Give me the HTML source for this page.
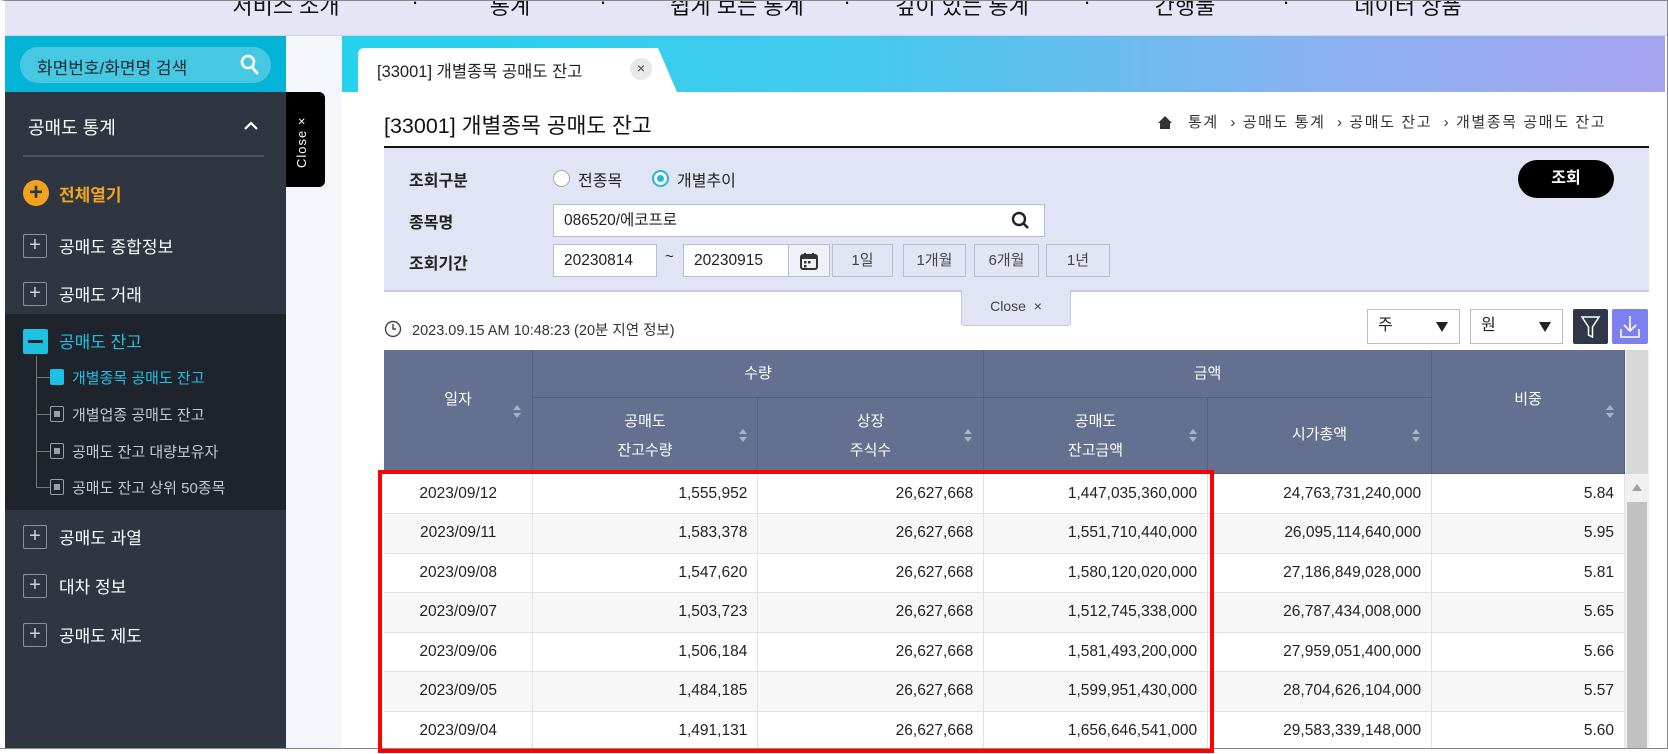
<!DOCTYPE html>
<html><head><meta charset="utf-8"><style>
*{box-sizing:border-box;margin:0;padding:0}
body{width:1668px;height:754px;overflow:hidden;background:#fff;font-family:"Liberation Sans","Noto Sans CJK KR",sans-serif;position:relative;color:#222}
.a{position:absolute}
.nav{left:0;top:0;width:1668px;height:36px;background:#e4e6f6;border-bottom:1px solid #d0d3e6}
.nav span{position:absolute;top:-11px;font-size:22px;color:#111;transform:translateX(-50%);white-space:nowrap}
.side{left:5px;top:36px;width:281px;height:712px;background:#2f3541}
.srch{left:5px;top:36px;width:281px;height:56px;background:#03b4d6}
.pill{left:20px;top:47px;width:251px;height:36px;border-radius:18px;background:#47c8e2;font-size:17px;color:#1a2a33;padding:7px 0 0 17px}
.st{color:#fff;font-size:17px;white-space:nowrap}
.box{width:24px;height:24px;border:1px solid #8a909c;border-radius:2px;color:#cfd3da;font-size:20px;line-height:20px;text-align:center}
.sub{font-size:15px;color:#c5c9d0;white-space:nowrap}
.ic{width:14px;height:16px;border:1px solid #9aa0aa;border-radius:2px}
.ic:after{content:"";position:absolute;left:3px;top:4px;width:6px;height:6px;background:#9aa0aa}
.grad{left:342px;top:36px;width:1323px;height:56px;background:linear-gradient(90deg,#25d2ec 0%,#45c8ee 40%,#8bb1f0 75%,#a7a5ef 100%)}
.th{background:#647090;color:#fff;font-size:15px;text-align:center;border-right:1px solid #56607e;border-bottom:1px solid #56607e}
.sort{position:absolute;width:8px;height:14px}
.sort:before{content:"";position:absolute;left:0;top:0;border-left:4px solid transparent;border-right:4px solid transparent;border-bottom:5px solid #a9b2c8}
.sort:after{content:"";position:absolute;left:0;top:8px;border-left:4px solid transparent;border-right:4px solid transparent;border-top:5px solid #a9b2c8}
table{border-collapse:collapse;position:absolute;left:384px;top:474px;width:1241px}
td{height:39.5px;font-size:15.5px;border-right:1px solid #e2e2e2;border-bottom:1px solid #e2e2e2;padding-right:10px;text-align:right;color:#222}
td:first-child{text-align:center;padding:0}
tr:nth-child(even) td{background:#f7f7f8}
.btn{height:33px;background:#e2e5f3;border:1px solid #b9bdd0;font-size:15px;color:#444;text-align:center;line-height:31px}
.inp{background:#fff;border:1px solid #b9bdd0;font-size:15.5px;padding-left:10px;line-height:31px;height:33px}
.lbl{font-size:16px;font-weight:bold;color:#222}
</style></head><body>
<div class="a nav">
<span style="left:286px">서비스 소개</span><span style="left:415px">·</span><span style="left:510px">통계</span><span style="left:603px">·</span><span style="left:737px">쉽게 보는 통계</span><span style="left:847px">·</span><span style="left:962px">깊이 있는 통계</span><span style="left:1087px">·</span><span style="left:1185px">간행물</span><span style="left:1286px">·</span><span style="left:1408px">데이터 상품</span>
</div>
<div class="a" style="left:0;top:0;width:1668px;height:754px;border:1px solid #888;border-left-width:5px;border-left-color:#fff;pointer-events:none"></div>
<div class="a side"></div>
<div class="a srch"></div>
<div class="a pill">화면번호/화면명 검색</div>
<svg class="a" style="left:240px;top:54px" width="20" height="22" viewBox="0 0 20 22"><circle cx="8" cy="8" r="6" fill="none" stroke="#fff" stroke-width="2.6"/><path d="M12 13l5 6" stroke="#fff" stroke-width="2.8" stroke-linecap="round"/></svg>
<div class="a st" style="left:28px;top:114px;font-size:18px">공매도 통계</div>
<svg class="a" style="left:243px;top:120px" width="16" height="12"><path d="M2 9l6-6 6 6" fill="none" stroke="#fff" stroke-width="2.2"/></svg>
<div class="a" style="left:23px;top:155px;width:241px;height:2px;background:#4b5261"></div>
<div class="a" style="left:23px;top:180px;width:26px;height:26px;border-radius:50%;background:#f0a21c;color:#2f3541;font-size:24px;line-height:25px;text-align:center;font-weight:bold">+</div>
<div class="a st" style="left:59px;top:181px;color:#f2a51e;font-size:17px;font-weight:bold">전체열기</div>
<div class="a box" style="left:23px;top:234px">+</div><div class="a st" style="left:59px;top:233px">공매도 종합정보</div>
<div class="a box" style="left:23px;top:282px">+</div><div class="a st" style="left:59px;top:281px">공매도 거래</div>
<div class="a" style="left:5px;top:314px;width:281px;height:196px;background:#1e232c"></div>
<div class="a" style="left:23px;top:329px;width:25px;height:25px;background:#1fc1e2;border-radius:2px"><div class="a" style="left:5px;top:11px;width:15px;height:3px;background:#1e232c"></div></div>
<div class="a st" style="left:59px;top:328px;color:#1fc1e2">공매도 잔고</div>
<div class="a" style="left:36px;top:356px;width:1px;height:132px;background:#777"></div>
<div class="a" style="left:36px;top:377px;width:14px;height:1px;background:#777"></div>
<div class="a" style="left:36px;top:414px;width:14px;height:1px;background:#777"></div>
<div class="a" style="left:36px;top:451px;width:14px;height:1px;background:#777"></div>
<div class="a" style="left:36px;top:487px;width:14px;height:1px;background:#777"></div>
<div class="a" style="left:50px;top:369px;width:14px;height:16px;background:#1fc1e2;border-radius:2px"></div>
<div class="a sub" style="left:72px;top:367px;color:#1fc1e2">개별종목 공매도 잔고</div>
<div class="a ic" style="left:50px;top:406px"></div><div class="a sub" style="left:72px;top:404px">개별업종 공매도 잔고</div>
<div class="a ic" style="left:50px;top:443px"></div><div class="a sub" style="left:72px;top:441px">공매도 잔고 대량보유자</div>
<div class="a ic" style="left:50px;top:479px"></div><div class="a sub" style="left:72px;top:477px">공매도 잔고 상위 50종목</div>
<div class="a box" style="left:23px;top:525px">+</div><div class="a st" style="left:59px;top:524px">공매도 과열</div>
<div class="a box" style="left:23px;top:574px">+</div><div class="a st" style="left:59px;top:573px">대차 정보</div>
<div class="a box" style="left:23px;top:623px">+</div><div class="a st" style="left:59px;top:622px">공매도 제도</div>
<div class="a" style="left:286px;top:36px;width:56px;height:712px;background:#f5f6fb"></div>
<div class="a" style="left:286px;top:92px;width:39px;height:95px;background:#000;border-radius:0 6px 6px 0"><div class="a" style="left:8px;top:76px;transform:rotate(-90deg);transform-origin:0 0;color:#fff;font-size:13px;white-space:nowrap;letter-spacing:1px">Close ×</div></div>
<div class="a grad"></div>
<div class="a" style="left:358px;top:48px;width:300px;height:44px;background:#fff;border-radius:6px 0 0 0"></div>
<svg class="a" style="left:655px;top:48px" width="22" height="44"><path d="M0 0h3l19 44H0z" fill="#fff"/></svg>
<div class="a" style="left:377px;top:58px;font-size:16.5px;color:#222;white-space:nowrap">[33001] 개별종목 공매도 잔고</div>
<div class="a" style="left:630px;top:58px;width:22px;height:22px;border-radius:50%;background:#e8e8e8;font-size:14px;text-align:center;line-height:21px;color:#444">×</div>
<div class="a" style="left:342px;top:92px;width:1323px;height:656px;background:#fff"></div>
<div class="a" style="left:384px;top:109px;font-size:21.5px;color:#111;white-space:nowrap">[33001] 개별종목 공매도 잔고</div>
<svg class="a" style="left:1157px;top:115px" width="16" height="15"><path d="M8 1L1 8h2v6h10V8h2z" fill="#333"/></svg>
<div class="a" style="left:1188px;top:111px;font-size:15px;color:#333;white-space:nowrap;letter-spacing:1.6px">통계 &nbsp;› 공매도 통계 &nbsp;› 공매도 잔고 &nbsp;› 개별종목 공매도 잔고</div>
<div class="a" style="left:384px;top:146px;width:1265px;height:146px;background:#e1e4f4;border-top:2px solid #111;border-bottom:2px solid #c5c9dc"></div>
<div class="a lbl" style="left:409px;top:167px">조회구분</div>
<div class="a lbl" style="left:409px;top:209px">종목명</div>
<div class="a lbl" style="left:409px;top:250px">조회기간</div>
<div class="a" style="left:553px;top:170px;width:17px;height:17px;border-radius:50%;border:1px solid #aaa;background:#fff"></div>
<div class="a" style="left:578px;top:167px;font-size:16px">전종목</div>
<div class="a" style="left:652px;top:170px;width:17px;height:17px;border-radius:50%;border:2px solid #1fb8dc;background:#fff"><div class="a" style="left:3px;top:3px;width:7px;height:7px;border-radius:50%;background:#1fb8dc"></div></div>
<div class="a" style="left:677px;top:167px;font-size:16px">개별추이</div>
<div class="a inp" style="left:553px;top:204px;width:492px">086520/에코프로</div>
<svg class="a" style="left:1011px;top:211px" width="20" height="20"><circle cx="8" cy="8" r="6" fill="none" stroke="#222" stroke-width="2.4"/><path d="M12 12l5 5" stroke="#222" stroke-width="2.6"/></svg>
<div class="a inp" style="left:553px;top:244px;width:104px">20230814</div>
<div class="a" style="left:665px;top:248px;font-size:15px">~</div>
<div class="a inp" style="left:683px;top:244px;width:106px">20230915</div>
<div class="a btn" style="left:788px;top:244px;width:42px;background:#f0f1f7"><svg width="20" height="20" style="margin-top:6px" viewBox="0 0 20 20"><rect x="2" y="4" width="16" height="14" rx="2" fill="none" stroke="#333" stroke-width="2"/><rect x="2" y="4" width="16" height="4" fill="#333"/><path d="M6 2v4M14 2v4" stroke="#333" stroke-width="2"/><rect x="5" y="10" width="2.5" height="2.5" fill="#333"/><rect x="9" y="10" width="2.5" height="2.5" fill="#333"/><rect x="5" y="14" width="2.5" height="2.5" fill="#333"/></svg></div>
<div class="a btn" style="left:832px;top:244px;width:61px">1일</div>
<div class="a btn" style="left:903px;top:244px;width:63px">1개월</div>
<div class="a btn" style="left:974px;top:244px;width:65px">6개월</div>
<div class="a btn" style="left:1046px;top:244px;width:64px">1년</div>
<div class="a" style="left:1518px;top:160px;width:96px;height:38px;border-radius:19px;background:#000;color:#fff;font-size:16px;font-weight:bold;text-align:center;line-height:37px">조회</div>
<div class="a" style="left:961px;top:290px;width:110px;height:36px;background:#e1e4f4;border:1px solid #c5c9dc;border-top:none;border-radius:0 0 3px 3px;font-size:14px;color:#444;text-align:center;line-height:32px">Close &nbsp;×</div>
<svg class="a" style="left:384px;top:320px" width="18" height="18"><circle cx="9" cy="9" r="7.5" fill="none" stroke="#444" stroke-width="1.4"/><path d="M9 4v5h3" fill="none" stroke="#444" stroke-width="1.4"/></svg>
<div class="a" style="left:412px;top:319px;font-size:14.5px;color:#333;white-space:nowrap">2023.09.15 AM 10:48:23 (20분 지연 정보)</div>
<div class="a inp" style="left:1367px;top:309px;width:93px;height:35px;font-size:16px">주</div>
<div class="a" style="left:1436px;top:322px;border-left:6px solid transparent;border-right:6px solid transparent;border-top:10px solid #222"></div>
<div class="a inp" style="left:1470px;top:309px;width:93px;height:35px;font-size:16px">원</div>
<div class="a" style="left:1539px;top:322px;border-left:6px solid transparent;border-right:6px solid transparent;border-top:10px solid #222"></div>
<div class="a" style="left:1573px;top:309px;width:35px;height:35px;background:#2f3646;border-radius:2px"><svg width="35" height="35"><path d="M9 8h17l-6.5 10v10l-4-2V18z" fill="none" stroke="#fff" stroke-width="1.5"/></svg></div>
<div class="a" style="left:1612px;top:309px;width:36px;height:35px;background:#7d80ef;border-radius:2px"><svg width="36" height="35"><path d="M18 7v15M12 16l6 6 6-6M9 20v8h18v-8" fill="none" stroke="#fff" stroke-width="1.6"/></svg></div>
<div class="a th" style="left:384px;top:350px;width:149px;height:124px;line-height:122px;padding-bottom:0"><span style="position:relative;top:-11px">일자</span></div><div class="a sort" style="left:513px;top:405px"></div>
<div class="a th" style="left:533px;top:350px;width:451px;height:48px;line-height:47px">수량</div>
<div class="a th" style="left:984px;top:350px;width:448px;height:48px;line-height:47px">금액</div>
<div class="a th" style="left:1432px;top:350px;width:193px;height:124px;line-height:122px"><span style="position:relative;top:-11px">비중</span></div><div class="a sort" style="left:1606px;top:405px"></div>
<div class="a th" style="left:533px;top:398px;width:225px;height:76px;padding-top:9px;line-height:29px">공매도<br>잔고수량</div><div class="a sort" style="left:739px;top:429px"></div>
<div class="a th" style="left:758px;top:398px;width:226px;height:76px;padding-top:9px;line-height:29px">상장<br>주식수</div><div class="a sort" style="left:964px;top:429px"></div>
<div class="a th" style="left:984px;top:398px;width:224px;height:76px;padding-top:9px;line-height:29px">공매도<br>잔고금액</div><div class="a sort" style="left:1189px;top:429px"></div>
<div class="a th" style="left:1208px;top:398px;width:224px;height:76px;line-height:74px">시가총액</div><div class="a sort" style="left:1412px;top:429px"></div>
<div class="a" style="left:1625px;top:350px;width:24px;height:398px;background:#f0f0f0"></div>
<div class="a" style="left:1626px;top:350px;width:22px;height:124px;background:#d8d8d8"></div>
<div class="a" style="left:1632px;top:484px;border-left:5px solid transparent;border-right:5px solid transparent;border-bottom:7px solid #a0a0a0"></div>
<div class="a" style="left:1627px;top:502px;width:20px;height:246px;background:#c1c1c1"></div>
<table>
<colgroup><col style="width:149px"><col style="width:225px"><col style="width:226px"><col style="width:224px"><col style="width:224px"><col style="width:193px"></colgroup>
<tr><td>2023/09/12</td><td>1,555,952</td><td>26,627,668</td><td>1,447,035,360,000</td><td>24,763,731,240,000</td><td>5.84</td></tr>
<tr><td>2023/09/11</td><td>1,583,378</td><td>26,627,668</td><td>1,551,710,440,000</td><td>26,095,114,640,000</td><td>5.95</td></tr>
<tr><td>2023/09/08</td><td>1,547,620</td><td>26,627,668</td><td>1,580,120,020,000</td><td>27,186,849,028,000</td><td>5.81</td></tr>
<tr><td>2023/09/07</td><td>1,503,723</td><td>26,627,668</td><td>1,512,745,338,000</td><td>26,787,434,008,000</td><td>5.65</td></tr>
<tr><td>2023/09/06</td><td>1,506,184</td><td>26,627,668</td><td>1,581,493,200,000</td><td>27,959,051,400,000</td><td>5.66</td></tr>
<tr><td>2023/09/05</td><td>1,484,185</td><td>26,627,668</td><td>1,599,951,430,000</td><td>28,704,626,104,000</td><td>5.57</td></tr>
<tr><td>2023/09/04</td><td>1,491,131</td><td>26,627,668</td><td>1,656,646,541,000</td><td>29,583,339,148,000</td><td>5.60</td></tr>
</table>
<div class="a" style="left:0;top:748px;width:1668px;height:6px;background:#fff;border-top:1px solid #888"></div>
<div class="a" style="left:378px;top:470px;width:836px;height:283px;border:4px solid #f00"></div>
</body></html>
